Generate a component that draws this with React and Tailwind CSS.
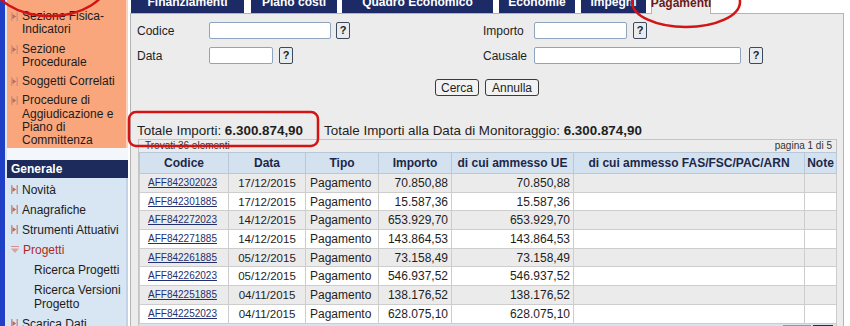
const rows = [
  ["AFF842302023", "17/12/2015", "70.850,88"],
  ["AFF842301885", "17/12/2015", "15.587,36"],
  ["AFF842272023", "14/12/2015", "653.929,70"],
  ["AFF842271885", "14/12/2015", "143.864,53"],
  ["AFF842261885", "05/12/2015", "73.158,49"],
  ["AFF842262023", "05/12/2015", "546.937,52"],
  ["AFF842251885", "04/11/2015", "138.176,52"],
  ["AFF842252023", "04/11/2015", "628.075,10"],
];

const tabs = [
  { label: "Finanziamenti", w: "w-[113px]", ml: "ml-[1px]" },
  { label: "Piano costi", w: "w-[86px]", ml: "ml-[7px]" },
  { label: "Quadro Economico", w: "w-[151px]", ml: "ml-[5px]" },
  { label: "Economie", w: "w-[76px]", ml: "ml-[6px]" },
  { label: "Impegni", w: "w-[65px]", ml: "ml-[6px]" },
];

const Bullet = () => (
  <svg width="7" height="9" viewBox="0 0 7 9" className="shrink-0 mt-[2px]">
    <rect x="0" y="0" width="1.5" height="9" fill="#d09282" />
    <rect x="5.5" y="0" width="1.5" height="9" fill="#d09282" />
    <path d="M1.5 2 L5.2 4.5 L1.5 7 Z" fill="#b86e5e" />
  </svg>
);

const SideItem = ({ children }) => (
  <div className="flex gap-[4px] pl-[4px]">
    <Bullet />
    <span>{children}</span>
  </div>
);

const Help = ({ ml = "ml-[5px]" }) => (
  <button className={`${ml} h-[17px] w-[14px] rounded-[2px] border border-[#3c4a5c] bg-[#e9ecef] text-[11px] font-bold leading-none text-[#222]`}>
    ?
  </button>
);

export default function App() {
  return (
    <div className="relative flex h-[326px] w-[850px] overflow-hidden bg-white font-['Liberation_Sans',Arial,sans-serif] text-[12px] text-[#1e1e1e]">
      {/* LEFT STRIP */}
      <div className="w-[5px] bg-[#1f3fc6]" />

      {/* SIDEBAR */}
      <div className="flex w-[123px] flex-col border-l-2 border-[#dfe6f5] bg-[#f3f6fb]">
        <div className="flex h-[148px] flex-col gap-[6px] border-r-2 border-[#fbd2bd] bg-[#f9a67d] pt-[10px] leading-[13.3px] text-[#1c1c1c]">
          <SideItem>
            Sezione Fisica-
            <br />
            Indicatori
          </SideItem>
          <SideItem>
            Sezione
            <br />
            Procedurale
          </SideItem>
          <SideItem>Soggetti Correlati</SideItem>
          <SideItem>
            Procedure di
            <br />
            Aggiudicazione e
            <br />
            Piano di
            <br />
            Committenza
          </SideItem>
        </div>

        <div className="mt-[12px] flex h-[20px] items-center bg-[#1c2a5c] pl-[4px] font-bold text-white">
          Generale
        </div>

        <div className="flex flex-1 flex-col gap-[6px] border-r-2 border-[#c3d3e6] bg-[#d8e5f2] pt-[5px] leading-[14px] text-[#1c1c1c]">
          <SideItem>Novità</SideItem>
          <SideItem>Anagrafiche</SideItem>
          <SideItem>Strumenti Attuativi</SideItem>
          <div className="flex gap-[4px] pl-[4px] text-[#b02a22]">
            <svg width="8" height="8" viewBox="0 0 8 8" className="mt-[3px] shrink-0">
              <rect x="0" y="0" width="8" height="1" fill="#d49090" />
              <path d="M0 2.5 L8 2.5 L4 7 Z" fill="#dba0a0" />
            </svg>
            <span>Progetti</span>
          </div>
          <div className="pl-[27px]">Ricerca Progetti</div>
          <div className="pl-[27px]">
            Ricerca Versioni
            <br />
            Progetto
          </div>
          <SideItem>Scarica Dati</SideItem>
        </div>
      </div>

      {/* MAIN */}
      <div className="ml-[2px] flex w-[714px] flex-col">
        {/* TABS */}
        <div className="flex h-[13px] items-end">
          {tabs.map((t) => (
            <div
              key={t.label}
              className={`${t.w} ${t.ml} -mt-[9px] flex h-[22px] items-center justify-center bg-[#1c2b66] font-bold text-white`}
            >
              {t.label}
            </div>
          ))}
          <div className="relative z-10 -mb-px ml-[5px] -mt-[9px] flex h-[23px] w-[60px] items-center justify-center border-x border-[#b4b4b4] bg-[#ececec] font-bold text-[#6b1a1a]">
            Pagamenti
          </div>
        </div>

        {/* PANEL */}
        <div className="flex flex-1 flex-col border border-b-0 border-[#b4b4b4] bg-[#ececec]">
          {/* FORM */}
          <div className="mt-[8px] flex h-[17px] items-center">
            <div className="flex w-[352px] items-center pl-[6px]">
              <span className="w-[72px]">Codice</span>
              <div className="h-[17px] w-[122px] rounded-[2px] border border-[#8ea5bd] bg-white" />
              <Help />
            </div>
            <span className="w-[51px]">Importo</span>
            <div className="h-[17px] w-[93px] rounded-[2px] border border-[#8ea5bd] bg-white" />
            <Help ml="ml-[6px]" />
          </div>
          <div className="mt-[8px] flex h-[17px] items-center">
            <div className="flex w-[352px] items-center pl-[6px]">
              <span className="w-[72px]">Data</span>
              <div className="h-[17px] w-[64px] rounded-[2px] border border-[#8ea5bd] bg-white" />
              <Help ml="ml-[6px]" />
            </div>
            <span className="w-[51px]">Causale</span>
            <div className="h-[17px] w-[207px] rounded-[2px] border border-[#8ea5bd] bg-white" />
            <Help ml="ml-[8px]" />
          </div>

          <div className="mt-[15px] flex justify-center gap-[6px]">
            <button className="h-[17px] w-[44px] rounded-[3px] border border-[#3a3a3a] bg-[#f2f2f2] leading-none">
              Cerca
            </button>
            <button className="h-[17px] w-[54px] rounded-[3px] border border-[#3a3a3a] bg-[#f2f2f2] leading-none">
              Annulla
            </button>
          </div>

          {/* TOTALS */}
          <div className="mt-[27px] flex h-[15px] items-center pl-[6px] text-[13.4px] leading-[15px]">
            <span>
              Totale Importi: <b>6.300.874,90</b>
            </span>
            <span className="ml-[21px]">
              Totale Importi alla Data di Monitoraggio: <b>6.300.874,90</b>
            </span>
          </div>

          {/* TABLE BOX */}
          <div className="ml-[7px] mt-[1px] w-[699px] flex-1 border border-[#c4c4c4] bg-[#ececec]">
            <div className="flex h-[12px] items-center justify-between px-[4px] text-[10px] leading-none text-[#333]">
              <span className="pl-[2px]">Trovati 36 elementi</span>
              <span>pagina 1 di 5</span>
            </div>
            <table className="w-[697px] table-fixed border-collapse">
              <colgroup>
                <col className="w-[89px]" />
                <col className="w-[77px]" />
                <col className="w-[73px]" />
                <col className="w-[73px]" />
                <col className="w-[122px]" />
                <col className="w-[231px]" />
                <col className="w-[32px]" />
              </colgroup>
              <thead>
                <tr className="h-[21px] bg-[#d4e2f0] text-[#1c2748]">
                  {["Codice", "Data", "Tipo", "Importo", "di cui ammesso UE", "di cui ammesso FAS/FSC/PAC/ARN", "Note"].map((h) => (
                    <th key={h} className="border border-[#b9c8d8] p-0 text-center font-bold">
                      {h}
                    </th>
                  ))}
                </tr>
              </thead>
              <tbody>
                {rows.map((r, i) => (
                  <tr key={r[0]} className={`h-[18.7px] ${i % 2 === 0 ? "bg-[#ebebeb]" : "bg-white"}`}>
                    <td className="border border-[#cdcdcd] p-0 pl-[8px] text-[10px] leading-[16px] text-[#24306e] underline">{r[0]}</td>
                    <td className="border border-[#cdcdcd] p-0 text-center text-[11.5px] leading-[16px]">{r[1]}</td>
                    <td className="border border-[#cdcdcd] p-0 pl-[4px] leading-[16px]">Pagamento</td>
                    <td className="border border-[#cdcdcd] p-0 pr-[3px] text-right leading-[16px]">{r[2]}</td>
                    <td className="border border-[#cdcdcd] p-0 pr-[3px] text-right leading-[16px]">{r[2]}</td>
                    <td className="border border-[#cdcdcd] p-0" />
                    <td className="border border-[#cdcdcd] p-0" />
                  </tr>
                ))}
              </tbody>
            </table>
            <div className="flex h-[8px] justify-end gap-[2px] bg-[#d6e4f2] pr-[3px] pt-[1px]">
              <div className="h-[12px] w-[28px] border border-[#8a9ab0] bg-[#f4f6f8]" />
              <div className="h-[12px] w-[20px] bg-[#1c2b66]" />
            </div>
          </div>
        </div>
      </div>

      {/* ANNOTATIONS */}
      <svg className="pointer-events-none absolute inset-0" width="850" height="326">
        <ellipse cx="50" cy="-20" rx="58" ry="36" fill="none" stroke="#d41414" strokeWidth="2.5" />
        <ellipse cx="686" cy="2" rx="54" ry="25" fill="none" stroke="#d41414" strokeWidth="2.5" />
        <rect x="129" y="112" width="189" height="34" rx="7" fill="none" stroke="#d41414" strokeWidth="2.5" />
      </svg>
    </div>
  );
}
